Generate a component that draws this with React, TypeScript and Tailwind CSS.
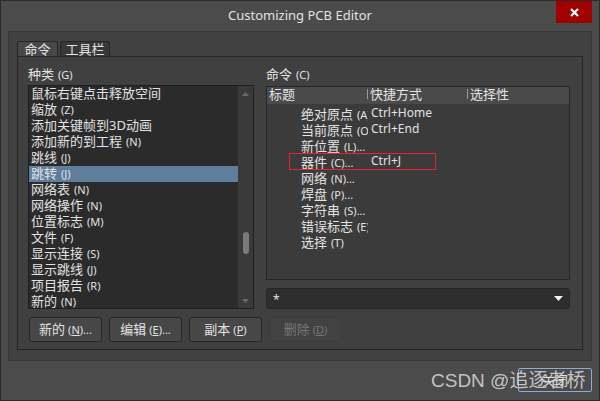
const categories: [string, string][] = [
  ["鼠标右键点击释放空间", ""],
  ["缩放", "(Z)"],
  ["添加关键帧到3D动画", ""],
  ["添加新的到工程", "(N)"],
  ["跳线", "(J)"],
  ["跳转", "(J)"],
  ["网络表", "(N)"],
  ["网络操作", "(N)"],
  ["位置标志", "(M)"],
  ["文件", "(F)"],
  ["显示连接", "(S)"],
  ["显示跳线", "(J)"],
  ["项目报告", "(R)"],
  ["新的", "(N)"],
];

const commands: [string, string, string][] = [
  ["绝对原点", "(A)", "Ctrl+Home"],
  ["当前原点", "(O)", "Ctrl+End"],
  ["新位置", "(L)...", ""],
  ["器件", "(C)...", "Ctrl+J"],
  ["网络", "(N)...", ""],
  ["焊盘", "(P)...", ""],
  ["字符串", "(S)...", ""],
  ["错误标志", "(E)", ""],
  ["选择", "(T)", ""],
];

function Zh({ zh, en }: { zh: string; en: string }) {
  return (
    <span className="whitespace-nowrap">
      <span className="text-[13px]">{zh}</span>
      {en && <span className="text-[11px] ml-[4px]">{en}</span>}
    </span>
  );
}

function Btn({ zh, k, rest, disabled }: { zh: string; k: string; rest: string; disabled?: boolean }) {
  return (
    <div
      className={
        disabled
          ? "w-[73px] h-[25px] rounded-[3px] bg-[#424242] border border-[#3d3d3d] text-[#777] flex items-center justify-center"
          : "w-[73px] h-[25px] rounded-[3px] bg-[#474747] border border-[#262626] flex items-center justify-center"
      }
    >
      <span className="text-[13px]">{zh}</span>
      <span className="text-[11px] ml-[3px]">
        (<span className="underline">{k}</span>){rest}
      </span>
    </div>
  );
}

export default function App() {
  return (
    <div className="w-[600px] h-[401px] bg-[#4b4b4b] border border-[#2b2b2b] flex flex-col relative text-[#e2e2e2] font-['Noto_Sans','Noto_Sans_CJK_SC',sans-serif] leading-none overflow-hidden">
      {/* title bar */}
      <div className="h-[30px] flex justify-center pt-[8px] relative">
        <span className="text-[13px]">Customizing PCB Editor</span>
        <div className="absolute right-[7px] top-0 w-[36px] h-[22px] bg-[#a00000] flex items-center justify-center">
          <svg width="9" height="9" viewBox="0 0 9 9">
            <path d="M1 1L8 8M8 1L1 8" stroke="#fff" strokeWidth="2.2" />
          </svg>
        </div>
      </div>

      {/* outer panel */}
      <div className="mx-[7px] h-[330px] bg-[#414141] border border-[#363636] pt-[9px] px-[8px]">
        <div className="flex gap-[2px] h-[15px]">
          <div className="w-[41px] bg-[#484848] border border-b-0 border-[#262626] rounded-t-[3px] flex items-center justify-center text-[13px]">
            命令
          </div>
          <div className="w-[50px] bg-[#383838] border border-b-0 border-[#262626] rounded-t-[3px] flex items-center justify-center text-[13px]">
            工具栏
          </div>
        </div>

        {/* tab content */}
        <div className="w-[566px] h-[294px] bg-[#404040] border border-[#262626] pt-[8px] pl-[10px] flex flex-col">
          <div className="flex gap-[12px]">
            {/* left column */}
            <div className="w-[226px] flex flex-col">
              <div className="h-[16px] flex items-center">
                <Zh zh="种类" en="(G)" />
              </div>
              <div className="mt-[4px] h-[224px] bg-[#2b2b2b] border border-[#1f1f1f] flex">
                <div className="flex-1 flex flex-col overflow-hidden">
                  {categories.map(([zh, en], i) => (
                    <div
                      key={i}
                      className={
                        "h-[16px] shrink-0 flex items-center pl-[2px] pb-[5px] " +
                        (i === 5 ? "bg-[#5e7e9c]" : "")
                      }
                    >
                      <Zh zh={zh} en={en} />
                    </div>
                  ))}
                </div>
                <div className="w-[15px] bg-[#3a3a3a] flex flex-col items-center pt-[6px] pb-[5px]">
                  <svg width="7" height="4" viewBox="0 0 7 4">
                    <path d="M0 4L3.5 0L7 4Z" fill="#6a6a6a" />
                  </svg>
                  <div className="w-[6px] h-[22px] rounded-[3px] bg-[#7a7a7a] mt-[136px]" />
                  <div className="flex-1" />
                  <svg width="7" height="4" viewBox="0 0 7 4">
                    <path d="M0 0L3.5 4L7 0Z" fill="#6a6a6a" />
                  </svg>
                </div>
              </div>
            </div>

            {/* right column */}
            <div className="w-[304px] flex flex-col">
              <div className="h-[16px] flex items-center">
                <Zh zh="命令" en="(C)" />
              </div>
              <div className="mt-[5px] h-[194px] bg-[#3b3b3b] border border-[#262626] relative">
                <div className="h-[17px] bg-[#4a4a4a] flex items-center text-[13px] pb-[3px]">
                  <div className="w-[100px] pl-[2px]">标题</div>
                  <div className="w-[100px] flex items-center">
                    <div className="w-px h-[10px] bg-[#9a9a9a] mr-[2px]" />
                    快捷方式
                  </div>
                  <div className="flex items-center">
                    <div className="w-px h-[10px] bg-[#9a9a9a] mr-[2px]" />
                    选择性
                  </div>
                </div>
                {commands.map(([zh, en, key], i) => (
                  <div key={i} className="h-[16px] flex items-center pt-[2px]">
                    <div className="w-[101px] pl-[34px] overflow-hidden whitespace-nowrap">
                      <Zh zh={zh} en={en} />
                    </div>
                    <div className="text-[12px] pl-[3px]">{key}</div>
                  </div>
                ))}
                <div className="absolute left-[22px] top-[66px] w-[147px] h-[17px] border border-solid border-[#ee2222]" />
              </div>
              <div className="mt-[8px] h-[21px] rounded-[3px] bg-[#2e2e2e] border border-[#262626] flex items-center justify-between pl-[6px] pr-[6px]">
                <span className="text-[12px] pt-[2px]">*</span>
                <svg width="9" height="5" viewBox="0 0 9 5">
                  <path d="M0 0L4.5 5L9 0Z" fill="#f0f0f0" />
                </svg>
              </div>
            </div>
          </div>

          {/* buttons */}
          <div className="flex gap-[7px] mt-[8px] ml-[1px]">
            <Btn zh="新的" k="N" rest="..." />
            <Btn zh="编辑" k="E" rest="..." />
            <Btn zh="副本" k="P" rest="" />
            <Btn zh="删除" k="D" rest="" disabled />
          </div>
        </div>
      </div>

      {/* bottom */}
      <div className="flex justify-end pr-[7px] pt-[7px]">
        <div className="w-[74px] h-[24px] rounded-[2px] border border-[#86aed6] bg-[#4b4b4b] flex items-center justify-center text-[13px]">
          关闭
        </div>
      </div>
      <div className="absolute left-[430px] top-[370px] text-[19px] text-[#d4d4d4]/90 font-['Liberation_Sans','Noto_Sans_CJK_SC',sans-serif]">
        CSDN @追逐者桥
      </div>
    </div>
  );
}
